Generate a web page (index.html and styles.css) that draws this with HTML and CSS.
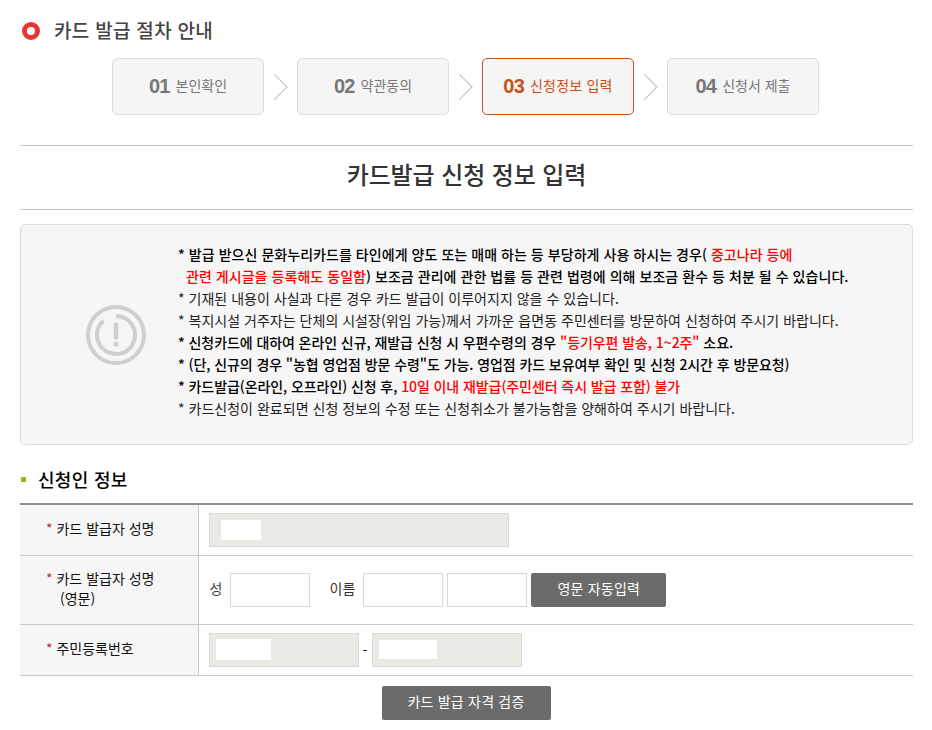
FILE: index.html
```html
<!DOCTYPE html>
<html lang="ko">
<head>
<meta charset="utf-8">
<title>카드 발급 절차 안내</title>
<link rel="stylesheet" href="styles.css">
</head>
<body>
<div class="wrap">
  <h2 class="page-head"><span class="ring"></span>카드 발급 절차 안내</h2>
  <ol class="steps">
    <li class="step"><b>01</b><span>본인확인</span></li>
    <li class="sep"><svg width="16" height="26" viewBox="0 0 16 26"><path d="M1.500 .5 14 13 1.500 25.500" fill="none" stroke="#c8c8c8" stroke-width="1.200"/></svg></li>
    <li class="step"><b>02</b><span>약관동의</span></li>
    <li class="sep"><svg width="16" height="26" viewBox="0 0 16 26"><path d="M1.500 .5 14 13 1.500 25.500" fill="none" stroke="#c8c8c8" stroke-width="1.200"/></svg></li>
    <li class="step on"><b>03</b><span>신청정보 입력</span></li>
    <li class="sep"><svg width="16" height="26" viewBox="0 0 16 26"><path d="M1.500 .5 14 13 1.500 25.500" fill="none" stroke="#c8c8c8" stroke-width="1.200"/></svg></li>
    <li class="step"><b>04</b><span>신청서 제출</span></li>
  </ol>
  <h1 class="title">카드발급 신청 정보 입력</h1>
  <div class="notice">
    <div class="notice-icon">
      <svg width="60" height="60" viewBox="0 0 60 60" fill="none" stroke="#cfcfcf">
        <circle cx="30" cy="30" r="28" stroke-width="4"/>
        <path d="M30 11A19 19 0 1 1 17.500 15.700" stroke-width="4"/>
        <path d="M30 19.500V32.500" stroke-width="4.500" stroke-linecap="round"/>
        <circle cx="30" cy="39" r="2.500" fill="#cfcfcf" stroke="none"/>
      </svg>
    </div>
    <div class="notice-text">
      <p class="strong wide">* 발급 받으신 문화누리카드를 타인에게 양도 또는 매매 하는 등 부당하게 사용 하시는 경우( <em>중고나라 등에</em></p>
      <p class="strong wide indent"><em>관련 게시글을 등록해도 동일함</em>) 보조금 관리에 관한 법률 등 관련 법령에 의해 보조금 환수 등 처분 될 수 있습니다.</p>
      <p>* 기재된 내용이 사실과 다른 경우 카드 발급이 이루어지지 않을 수 있습니다.</p>
      <p>* 복지시설 거주자는 단체의 시설장(위임 가능)께서 가까운 읍면동 주민센터를 방문하여 신청하여 주시기 바랍니다.</p>
      <p class="strong tight">* 신청카드에 대하여 온라인 신규, 재발급 신청 시 우편수령의 경우 <em>"등기우편 발송, 1~2주"</em> 소요.</p>
      <p class="strong tight">* (단, 신규의 경우 "농협 영업점 방문 수령"도 가능. 영업점 카드 보유여부 확인 및 신청 2시간 후 방문요청)</p>
      <p class="strong tight">* 카드발급(온라인, 오프라인) 신청 후, <em>10일 이내 재발급(주민센터 즉시 발급 포함) 불가</em></p>
      <p>* 카드신청이 완료되면 신청 정보의 수정 또는 신청취소가 불가능함을 양해하여 주시기 바랍니다.</p>
    </div>
  </div>
  <h3 class="section"><span class="bullet"></span>신청인 정보</h3>
  <table class="form">
    <tr class="r1">
      <th><span class="th-in"><i>*</i> 카드 발급자 성명</span></th>
      <td><span class="field gray w300"><span class="mask m40"></span></span></td>
    </tr>
    <tr class="r2">
      <th><span class="th-in"><i>*</i> 카드 발급자 성명<br><span class="sub">(영문)</span></span></th>
      <td>
        <div class="row">
          <span class="lbl-s">성</span><span class="field w80"></span>
          <span class="lbl-n">이름</span><span class="field w80"></span><span class="field w80 g4"></span>
          <button class="btn auto" type="button">영문 자동입력</button>
        </div>
      </td>
    </tr>
    <tr class="r3">
      <th><span class="th-in"><i>*</i> 주민등록번호</span></th>
      <td>
        <div class="row">
          <span class="field gray w150 p7"><span class="mask m55"></span></span>
          <span class="dash">-</span>
          <span class="field gray w150 p6"><span class="mask m58"></span></span>
        </div>
      </td>
    </tr>
  </table>
  <div class="actions"><button class="btn check" type="button">카드 발급 자격 검증</button></div>
</div>
</body>
</html>
```
FILE: styles.css
```css
* { box-sizing: border-box; }
html, body { margin: 0; padding: 0; background: #fff; }
body {
  font-family: "Noto Sans CJK KR", "Noto Sans", sans-serif;
  font-size: 14px;
  color: #333;
  overflow: hidden;
}
.wrap { width: 893px; margin-left: 20px; }
.page-head {
  margin: 0;
  padding-top: 17px;
  height: 58px;
  display: flex;
  align-items: flex-start;
  font-size: 19px;
  letter-spacing: .3px;
  line-height: 26px;
  font-weight: 500;
  color: #444;
}
.ring {
  width: 18px; height: 18px;
  margin: 5px 14px 0 2px;
  border: 5px solid #e93535;
  border-radius: 50%;
}
.steps {
  list-style: none;
  margin: 0; padding: 0;
  display: flex;
  justify-content: center;
  padding-right: 2px;
}
.step {
  width: 152px; height: 57px;
  background: #f5f5f5;
  border: 1px solid #ddd;
  border-radius: 5px;
  display: flex;
  align-items: center;
  justify-content: center;
  padding-bottom: 2px;
  color: #777;
}
.step b { font: 700 20px/1 "Liberation Sans", sans-serif; letter-spacing: -.8px; margin-right: 6px; }
.step span { font-size: 14px; position: relative; top: -1px; }
.step.on { border-color: #c8501a; color: #c8501a; }
.step.on span { letter-spacing: .2px; }
.sep { width: 33px; display: flex; align-items: center; justify-content: center; padding-left: 1px; }
.title {
  margin: 30px 0 0;
  height: 65px;
  border-top: 1px solid #c8c8c8;
  border-bottom: 1px solid #c8c8c8;
  text-align: center;
  font-size: 24px;
  letter-spacing: -.1px;
  line-height: 56px;
  font-weight: 500;
  color: #333;
}
.notice {
  margin-top: 14px;
  height: 221px;
  background: #f6f6f6;
  border: 1px solid #ddd;
  border-radius: 5px;
  display: flex;
}
.notice-icon { width: 157px; padding: 80px 0 0 65px; }
.notice-text { padding-top: 18px; color: #222; }
.notice-text p { margin: 0; line-height: 22px; height: 22px; white-space: nowrap; letter-spacing: .02px; }
.notice-text .strong { color: #000; font-weight: 500; }
.notice-text .wide { letter-spacing: .05px; }
.notice-text .tight { letter-spacing: -.08px; }
.notice-text .indent { padding-left: 8px; }
.notice-text em { font-style: normal; color: #f00; }
.section {
  margin: 21px 0 0;
  height: 37px;
  display: flex;
  align-items: flex-start;
  font-size: 18px;
  letter-spacing: .3px;
  line-height: 26px;
  font-weight: 500;
  color: #000;
}
.bullet { width: 5px; height: 5px; background: #8fbc1e; margin: 11px 12px 0 1px; }
.form {
  width: 100%;
  border-collapse: collapse;
  border-top: 2px solid #8f8f8f;
  table-layout: fixed;
}
.form tr { border-bottom: 1px solid #c8c8c8; }
.r1 { height: 51px; }
.r2 { height: 69px; }
.r3 { height: 51px; }
.form th {
  width: 178px;
  padding: 0 0 0 26px;
  background: #f6f6f6;
  border-right: 1px solid #c8c8c8;
  text-align: left;
  font-weight: 400;
  color: #111;
  line-height: 20px;
}
.th-in { display: block; position: relative; top: -2px; }
.form th i { font-style: normal; color: #b5332f; }
.form th .sub { padding-left: 14px; }
.form td { padding: 0 0 0 10px; }
.row { display: flex; align-items: center; }
.field {
  display: block;
  height: 34px;
  background: #fff;
  border: 1px solid #d9d9d9;
}
.field.gray { background: #eaeae4; }
.w300 { width: 300px; padding: 6px 0 0 11px; }
.w80 { width: 80px; }
.w150 { width: 150px; }
.g4 { margin-left: 4px; }
.p7 { padding: 5px 0 0 6px; }
.p6 { padding: 6px 0 0 6px; }
.mask { display: block; background: #fff; }
.m40 { width: 40px; height: 20px; }
.m55 { width: 55px; height: 21px; }
.m58 { width: 58px; height: 19px; }
.lbl-s { width: 21px; padding-left: 1px; color: #444; position: relative; top: -2px; }
.lbl-n { margin: 0 8px 0 20px; color: #333; position: relative; top: -2px; }
.dash { width: 13px; text-align: center; color: #000; }
.btn {
  border: 0;
  border-radius: 2px;
  background: #6b6b6b;
  color: #fff;
  font: 400 14px/1 "Noto Sans CJK KR", sans-serif;
  height: 34px;
  padding: 0 0 3px;
}
.auto { width: 135px; margin-left: 4px; letter-spacing: .2px; }
.actions { display: flex; justify-content: center; padding: 10px 0 0; }
.check { width: 169px; margin-right: 1px; letter-spacing: .2px; }
```
